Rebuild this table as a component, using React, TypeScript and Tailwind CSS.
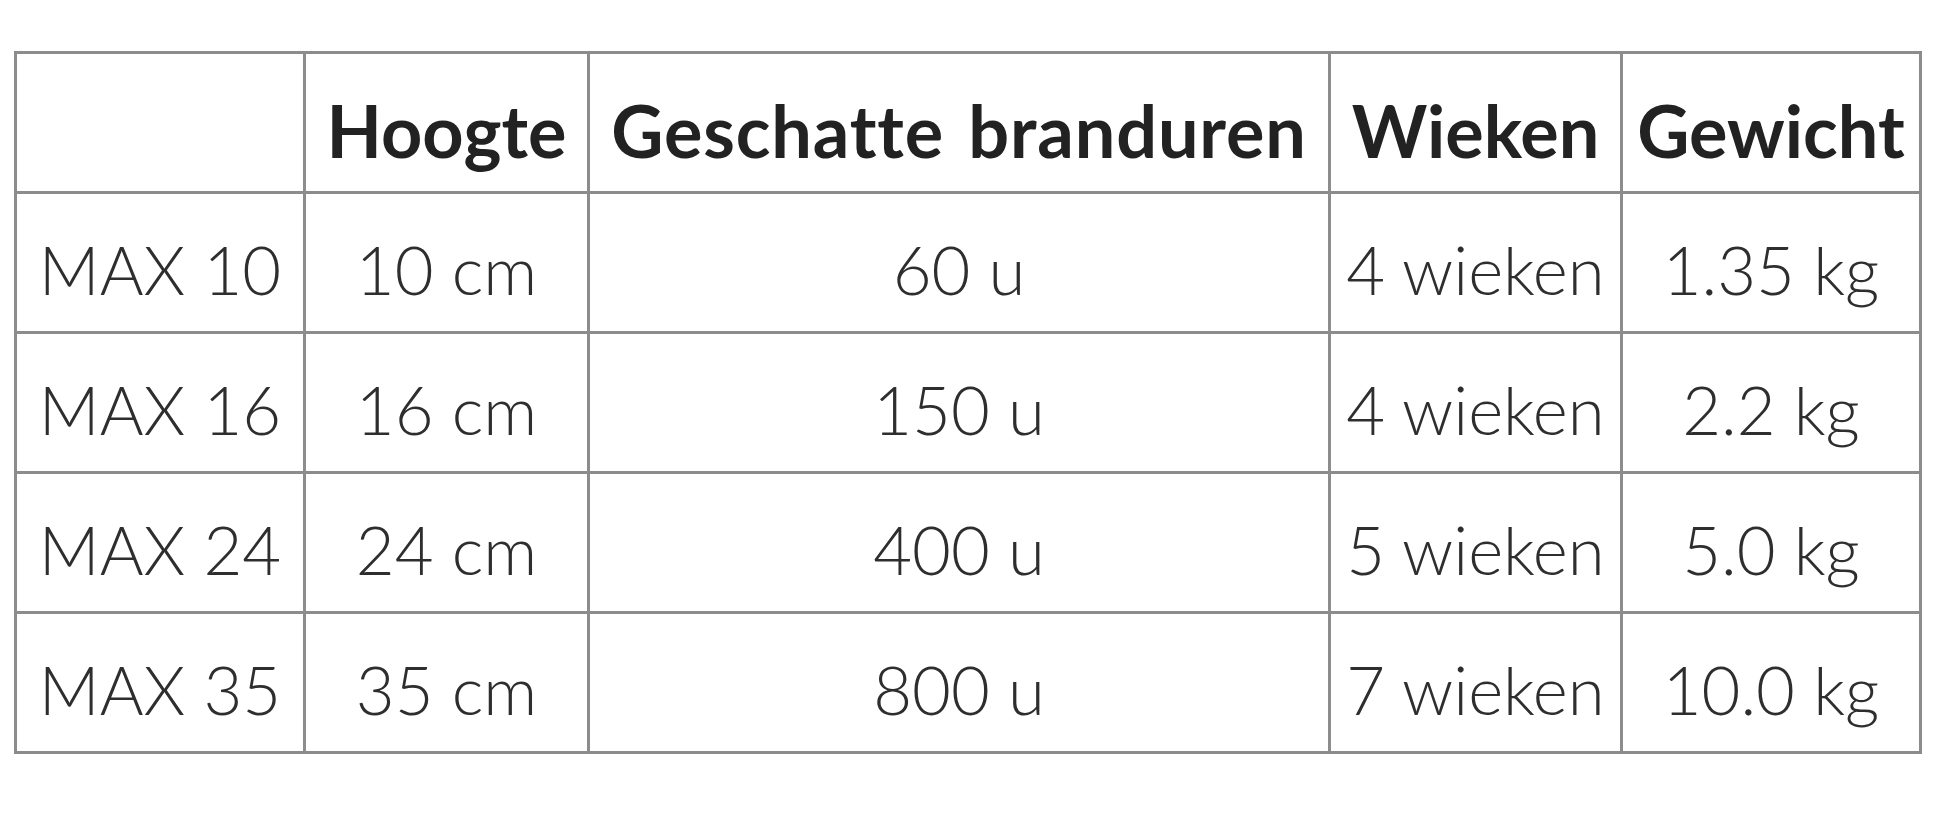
const rows = [
  ['MAX 10', '10 cm', '60 u', '4 wieken', '1.35 kg'],
  ['MAX 16', '16 cm', '150 u', '4 wieken', '2.2 kg'],
  ['MAX 24', '24 cm', '400 u', '5 wieken', '5.0 kg'],
  ['MAX 35', '35 cm', '800 u', '7 wieken', '10.0 kg'],
];

const headers = ['', 'Hoogte', 'Geschatte branduren', 'Wieken', 'Gewicht'];
const widths = ['w-[289px]', 'w-[284px]', 'w-[741px]', 'w-[292px]', 'w-[299px]'];

export default function App() {
  return (
    <div className="min-h-[813px] w-[1946px] bg-white pt-[51px] pl-[14px] font-['Lato',sans-serif] [font-variant-ligatures:none]">
      <table className="table-fixed border-collapse border-[3px] border-[#8c8c8c] w-[1907px]">
        <thead>
          <tr className="h-[140px]">
            {headers.map((h, i) => (
              <th
                key={i}
                className={`${widths[i]} ${i === 2 ? 'tracking-[0.012em] [word-spacing:6px]' : ''} border-[3px] border-[#8c8c8c] pt-[14px] text-center text-[72px] font-bold text-[#222222] whitespace-nowrap`}
              >
                {h}
              </th>
            ))}
          </tr>
        </thead>
        <tbody>
          {rows.map((r) => (
            <tr key={r[0]} className="h-[140px]">
              {r.map((c, i) => (
                <td
                  key={i}
                  className="border-[3px] border-[#8c8c8c] pt-[14px] text-center text-[67px] font-light text-[#2e2e2e] whitespace-nowrap"
                >
                  {c}
                </td>
              ))}
            </tr>
          ))}
        </tbody>
      </table>
    </div>
  );
}
